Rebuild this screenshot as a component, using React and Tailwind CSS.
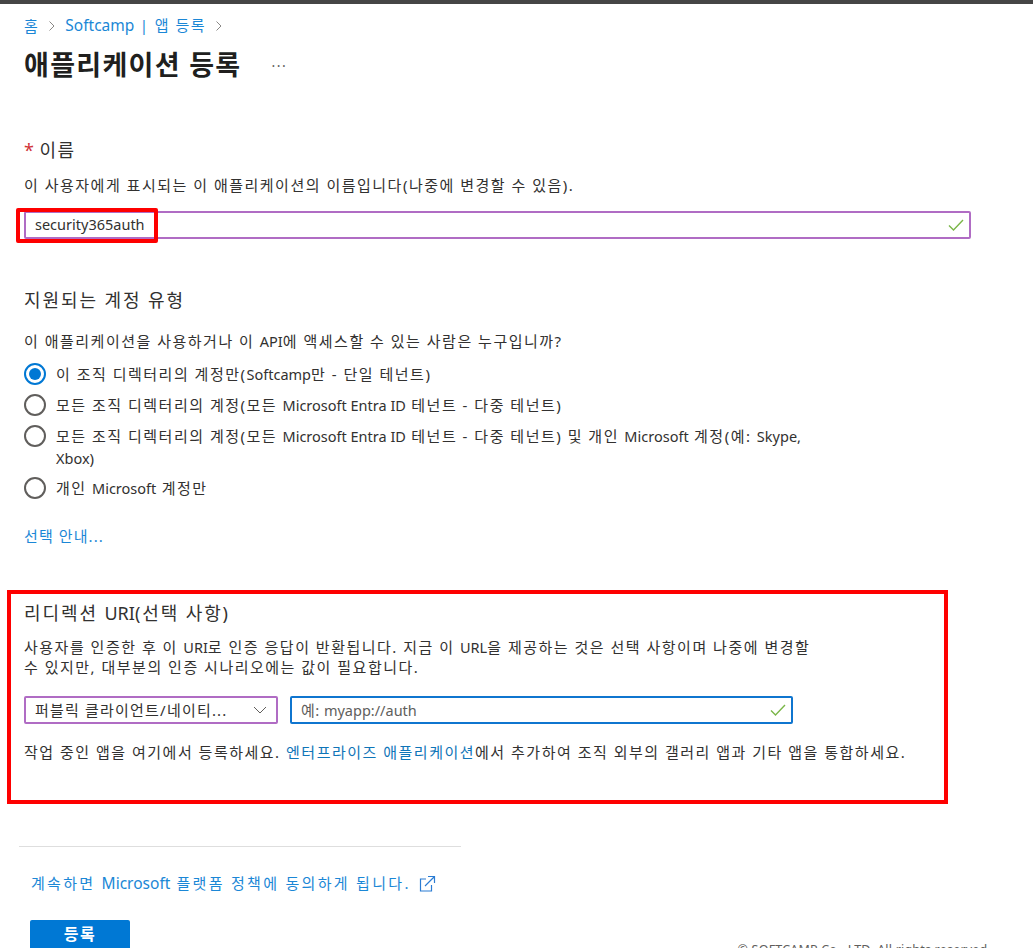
import React from 'react';

const font = { fontFamily: '"Noto Sans", "Noto Sans CJK KR", sans-serif' };

// latin runs keep their own width, hangul around them is tracked out
const L = ({ children }) => <span className="text-[14.5px] tracking-normal">{children}</span>;
const LWide = ({ children }) => <span className="text-[15.5px] tracking-normal">{children}</span>;

const Chevron = () => (
  <svg width="8" height="12" viewBox="0 0 8 12" fill="none" stroke="#8a8886" strokeWidth="1">
    <path d="M1.5 1.5 6 6l-4.5 4.5" />
  </svg>
);

const Check = () => (
  <svg width="16" height="12" viewBox="0 0 16 12" fill="none" stroke="#7ab648" strokeWidth="1.4">
    <path d="M1 6.5 5.5 11 15 1" />
  </svg>
);

const Radio = ({ checked }) => (
  <span
    className={
      checked
        ? 'mt-[1px] flex h-[22px] w-[22px] shrink-0 items-center justify-center rounded-full border-2 border-[#0078d4]'
        : 'mt-[1px] flex h-[22px] w-[22px] shrink-0 items-center justify-center rounded-full border-2 border-[#605e5c]'
    }
  >
    {checked && <span className="h-[12px] w-[12px] rounded-full bg-[#0078d4]" />}
  </span>
);

const options = [
  { text: <>이 조직 디렉터리의 계정만(<L>Softcamp</L>만 - 단일 테넌트)</>, checked: true, mt: 'mt-0' },
  { text: <>모든 조직 디렉터리의 계정(모든 <L>Microsoft Entra ID</L> 테넌트 - 다중 테넌트)</>, mt: 'mt-[8px]' },
  { text: <>모든 조직 디렉터리의 계정(모든 <L>Microsoft Entra ID</L> 테넌트 - 다중 테넌트) 및 개인 <L>Microsoft</L> 계정(예: <L>Skype, Xbox</L>)</>, mt: 'mt-[8px]' },
  { text: <>개인 <L>Microsoft</L> 계정만</>, mt: 'mt-[7px]' },
];

export default function App() {
  return (
    <div className="relative h-[948px] w-[1033px] overflow-hidden bg-white text-[15px] tracking-[1.5px] text-[#323130]" style={font}>
      <div className="h-[4px] bg-[#454545]" />

      <div className="flex h-[44px] items-center gap-[9px] pl-[24px] text-[#1b87d6]">
        <span>홈</span>
        <Chevron />
        <span><LWide>Softcamp</LWide> | 앱 등록</span>
        <Chevron />
      </div>

      <div className="flex h-[34px] items-center pl-[24px]">
        <h1 className="text-[27px] leading-[34px] font-bold tracking-[1.3px] text-[#201f1e]">애플리케이션 등록</h1>
        <span className="ml-[30px] text-[14px] text-[#605e5c]">···</span>
      </div>

      <div className="relative mt-[55px] pl-[24px]">
        <div className="flex h-[26px] items-center text-[18px] tracking-[1.5px]">
          <span className="mr-[4px] text-[#d13438]">*</span>이름
        </div>
        <p className="mt-[11px] h-[22px] leading-[22px]">이 사용자에게 표시되는 이 애플리케이션의 이름입니다(나중에 변경할 수 있음).</p>
        <div className="mt-[15px] flex h-[28px] w-[947px] items-center justify-between rounded-[2px] border-2 border-[#b06cc4] pl-[9px] pr-[5px]">
          <L>security365auth</L>
          <Check />
        </div>
        <div className="absolute left-[16px] top-[71px] h-[35px] w-[142px] rounded-[2px] border-[4px] border-[#fe0000]" />
      </div>

      <div className="mt-[48px] pl-[24px]">
        <h2 className="h-[26px] text-[18px] leading-[26px] font-normal tracking-[1.9px]">지원되는 계정 유형</h2>
        <p className="mt-[17px] h-[22px] leading-[22px]">이 애플리케이션을 사용하거나 이 <L>API</L>에 액세스할 수 있는 사람은 누구입니까?</p>
        <div className="mt-[10px] w-[790px]">
          {options.map((o, i) => (
            <div key={i} className={`flex gap-[10px] leading-[22px] ${o.mt}`}>
              <Radio checked={o.checked} />
              <span className="pt-[1px]">{o.text}</span>
            </div>
          ))}
        </div>
        <a className="mt-[26px] block h-[22px] leading-[22px] tracking-[1.1px] text-[#1b87d6]">선택 안내...</a>
      </div>

      <section className="ml-[7px] mt-[43px] h-[214px] w-[941px] border-[4px] border-[#fe0000] pl-[13px] pt-[6px]">
        <h2 className="h-[26px] text-[18px] leading-[26px] font-normal tracking-[1.9px]">리디렉션 <span className="tracking-normal">URI</span>(선택 사항)</h2>
        <p className="mt-[11px] w-[800px] leading-[20px]">
          사용자를 인증한 후 이 <L>URI</L>로 인증 응답이 반환됩니다. 지금 이 <L>URL</L>을 제공하는 것은 선택 사항이며 나중에 변경할 수 있지만, 대부분의 인증 시나리오에는 값이 필요합니다.
        </p>
        <div className="mt-[19px] flex gap-[12px]">
          <div className="flex h-[28px] w-[254px] items-center justify-between rounded-[2px] border-2 border-[#b06cc4] pl-[9px] pr-[9px]">
            <span className="whitespace-nowrap tracking-[1.2px]">퍼블릭 클라이언트/네이티...</span>
            <svg width="14" height="8" viewBox="0 0 14 8" fill="none" stroke="#605e5c" strokeWidth="1" className="shrink-0">
              <path d="M1 1l6 6 6-6" />
            </svg>
          </div>
          <div className="flex h-[28px] w-[503px] items-center justify-between rounded-[2px] border-2 border-[#0f75cf] pl-[9px] pr-[5px]">
            <span className="tracking-[0.4px] text-[#605e5c]">예: <L>myapp://auth</L></span>
            <Check />
          </div>
        </div>
        <p className="mt-[17px] h-[22px] leading-[22px] whitespace-nowrap">
          작업 중인 앱을 여기에서 등록하세요. <a className="text-[#0f75b8]">엔터프라이즈 애플리케이션</a>에서 추가하여 조직 외부의 갤러리 앱과 기타 앱을 통합하세요.
        </p>
      </section>

      <div className="ml-[19px] mt-[42px] h-[1px] w-[442px] bg-[#dedede]" />

      <div className="ml-[31px] mt-[25px] flex h-[24px] items-center gap-[7px] tracking-[2.3px] text-[#1b87d6]">
        <span className="whitespace-nowrap">계속하면 <LWide>Microsoft</LWide> 플랫폼 정책에 동의하게 됩니다.</span>
        <svg width="18" height="18" viewBox="0 0 18 18" fill="none" stroke="#2b7cd3" strokeWidth="1.2" className="shrink-0">
          <path d="M8 4H2.5v12h11V10M10 1.5h6.5V8M16.5 1.5 7 11" />
        </svg>
      </div>

      <div className="ml-[30px] mt-[24px] flex w-[961px] items-start justify-between">
        <button className="h-[40px] w-[100px] rounded-[2px] bg-[#0078d4] pb-[13px] text-[16px] font-bold text-white">등록</button>
        <span className="mt-[22px] text-[12.5px] leading-[16px] tracking-[0.2px] text-[#605e5c]">© SOFTCAMP Co., LTD. All rights reserved.</span>
      </div>
    </div>
  );
}
